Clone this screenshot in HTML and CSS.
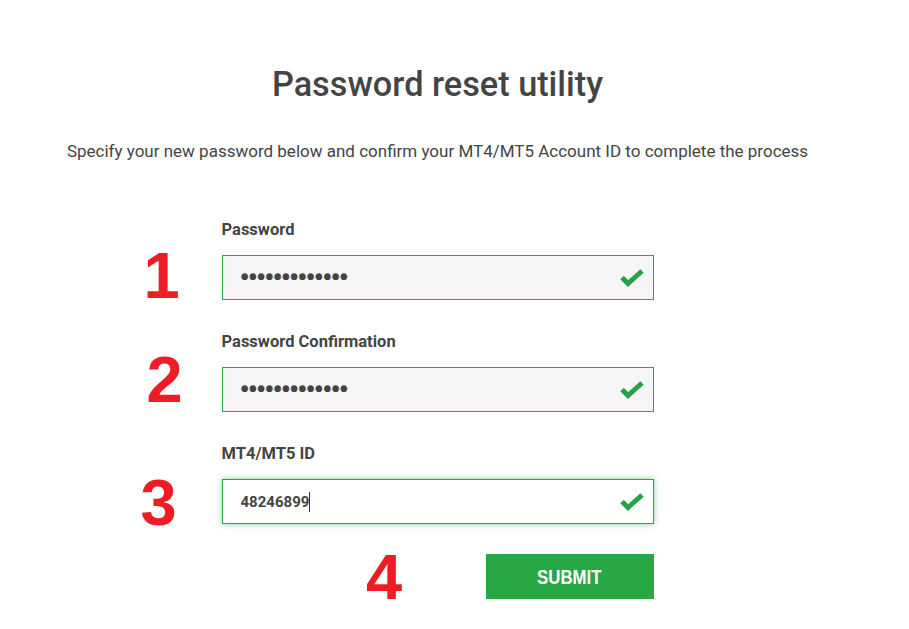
FILE: index.html
```html
<!DOCTYPE html>
<html lang="en">
<head>
<meta charset="utf-8">
<title>Password reset utility</title>
<link rel="stylesheet" href="styles.css">
</head>
<body>
<main class="page">
  <h1 class="title">Password reset utility</h1>
  <p class="lead">Specify your new password below and confirm your MT4/MT5 Account ID to complete the process</p>
  <form class="form">
    <div class="field">
      <label class="label" for="pw">Password</label>
      <div class="control">
        <input id="pw" class="input" type="password" value="abcdefghijklm">
        <svg class="check" viewBox="0 0 24 18" width="24" height="18"><polyline points="2,8.5 8,14.5 22,2" /></svg>
        <span class="step step-1">1</span>
      </div>
    </div>
    <div class="field">
      <label class="label" for="pwc">Password Confirmation</label>
      <div class="control">
        <input id="pwc" class="input" type="password" value="abcdefghijklm">
        <svg class="check" viewBox="0 0 24 18" width="24" height="18"><polyline points="2,8.5 8,14.5 22,2" /></svg>
        <span class="step step-2">2</span>
      </div>
    </div>
    <div class="field">
      <label class="label" for="acc">MT4/MT5 ID</label>
      <div class="control">
        <input id="acc" class="input input-text is-focused" type="text" value="48246899">
        <span class="caret"></span>
        <svg class="check" viewBox="0 0 24 18" width="24" height="18"><polyline points="2,8.5 8,14.5 22,2" /></svg>
        <span class="step step-3">3</span>
      </div>
    </div>
    <div class="actions">
      <span class="step step-4">4</span>
      <button class="submit" type="button"><span class="submit-text">SUBMIT</span></button>
    </div>
  </form>
</main>
</body>
</html>
```

FILE: styles.css
```css
html, body {
  margin: 0;
  padding: 0;
  background: #ffffff;
}

body {
  font-family: Roboto, "Liberation Sans", sans-serif;
  color: #444444;
}

.page {
  width: 875px;
  padding-top: 63px;
  text-align: center;
}

.title {
  margin: 0;
  font-size: 34.3px;
  line-height: 42px;
  font-weight: 500;
  color: #444444;
}

.lead {
  margin: 36px 0 0;
  font-size: 17px;
  line-height: 20px;
  font-weight: 400;
  color: #444444;
}

.form {
  width: 432px;
  margin: 59px auto 0;
  text-align: left;
}

.field {
  margin-bottom: 32px;
}

.label {
  display: block;
  font-size: 16.5px;
  line-height: 20px;
  font-weight: 700;
  color: #444444;
  margin-bottom: 15px;
}

.control {
  position: relative;
  height: 45px;
}

.input {
  box-sizing: border-box;
  display: block;
  width: 100%;
  height: 45px;
  margin: 0;
  padding: 0 44px 0 18px;
  border: 1px solid #2ea449;
  border-radius: 0;
  background: #f6f6f6;
  font-family: Roboto, "Liberation Sans", sans-serif;
  font-size: 15px;
  font-weight: 700;
  color: #444444;
  outline: none;
}

.input[type="password"] {
  font-size: 28px;
  letter-spacing: -1.8px;
  padding-left: 17px;
}

.input.is-focused {
  background: #ffffff;
  box-shadow: 0 0 6px rgba(40, 167, 69, 0.55);
}

.caret {
  position: absolute;
  left: 87px;
  top: 13px;
  width: 1px;
  height: 20px;
  background: #333333;
}

.check {
  position: absolute;
  right: 10px;
  top: 14px;
  fill: none;
  stroke: #2aa146;
  stroke-width: 5;
}

.step {
  position: absolute;
  width: 40px;
  text-align: center;
  font-family: "Liberation Sans", Arial, sans-serif;
  font-weight: 700;
  font-size: 65px;
  line-height: 65px;
  color: #ee1c25;
}

.step-1 { left: -80px; top: -12px; }
.step-2 { left: -77px; top: -20px; }
.step-3 { left: -83px; top: -9px; }

.actions {
  position: relative;
  display: flex;
  justify-content: flex-end;
  margin-top: -2px;
}

.step-4 {
  left: 142.5px;
  top: -9.5px;
}

.submit {
  width: 168px;
  height: 45px;
  margin: 0;
  padding: 0;
  border: 0;
  border-radius: 0;
  background: #28a745;
  color: #ffffff;
  font-family: "Liberation Sans", Arial, sans-serif;
  font-weight: 700;
  font-size: 21px;
  cursor: pointer;
}

.submit-text {
  display: inline-block;
  transform: scaleX(0.8);
}
```
